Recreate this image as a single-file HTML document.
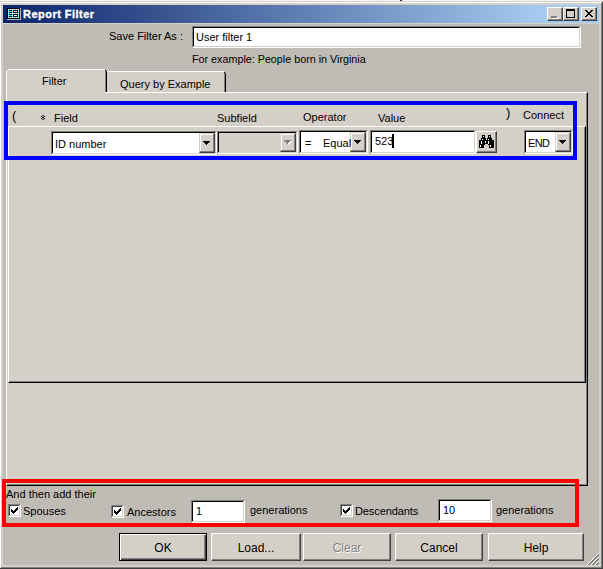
<!DOCTYPE html>
<html><head><meta charset="utf-8">
<style>
*{margin:0;padding:0;box-sizing:border-box}
html,body{width:603px;height:569px;overflow:hidden}
body{position:relative;background:#f6f6f6;font-family:"Liberation Sans",sans-serif;font-size:11px;color:#000}
.a{position:absolute}
.t{position:absolute;white-space:pre;line-height:13px;font-size:11px}
.raised{position:absolute;background:#d4d0c8;border:1px solid;border-color:#fff #404040 #404040 #fff;box-shadow:inset -1px -1px #808080}
.sunken{position:absolute;background:#fff;border:1px solid;border-color:#808080 #fff #fff #808080;box-shadow:inset -1px -1px #d4d0c8,inset 1px 1px #000}
.dd{position:absolute;top:1px;width:16px;bottom:1px;background:#d4d0c8;border:1px solid;border-color:#d4d0c8 #404040 #404040 #d4d0c8;box-shadow:inset -1px -1px #808080,inset 1px 1px #fff}
.arr{position:absolute;left:4px;top:7px;width:0;height:0;border-left:3.5px solid transparent;border-right:3.5px solid transparent;border-top:4px solid #000}
.cb{position:absolute;width:13px;height:13px;background:#fff;border:1px solid;border-color:#808080 #fff #fff #808080;box-shadow:inset -1px -1px #d4d0c8,inset 1px 1px #404040}
.btn{position:absolute;top:533px;height:28px;background:#d4d0c8;border:1px solid;border-color:#fff #404040 #404040 #fff;box-shadow:inset -1px -1px #808080;text-align:center;line-height:28px;font-size:12px}
.cap{position:absolute;top:7px;width:16px;height:14px;background:#d4d0c8;border:1px solid;border-color:#fff #404040 #404040 #fff;box-shadow:inset -1px -1px #808080}
</style></head><body>
<div class="a" style="left:400px;top:0;width:2px;height:1px;background:#333"></div>
<div class="a" style="left:-1px;top:1px;width:604px;height:568px;background:#d4d0c8;border:1px solid;border-color:#d4d0c8 #404040 #404040 #d4d0c8;box-shadow:inset 1px 1px #fff,inset -1px -1px #808080"></div>
<div class="a" style="left:3px;top:5px;width:596px;height:18px;background:linear-gradient(to right,#0a246a 0px,#a6caf0 540px)"></div>
<svg class="a" style="left:7px;top:8px" width="14" height="12" shape-rendering="crispEdges"><rect x="0" y="0" width="14" height="12" fill="#b8b8b8"/><rect x="0" y="0" width="13" height="11" fill="#000"/><rect x="1" y="1" width="11" height="9" fill="#0ff"/><path fill="#fff" d="M1 1h1v1h-1zM3 1h1v1h-1zM5 1h1v1h-1zM7 1h1v1h-1zM9 1h1v1h-1zM11 1h1v1h-1zM1 5h1v1h-1zM3 5h1v1h-1zM5 5h1v1h-1zM7 5h1v1h-1zM9 5h1v1h-1zM11 5h1v1h-1zM1 9h1v1h-1zM3 9h1v1h-1zM5 9h1v1h-1zM7 9h1v1h-1zM9 9h1v1h-1zM11 9h1v1h-1zM1 3h1v1h-1zM1 7h1v1h-1zM5 3h1v1h-1zM5 7h1v1h-1zM11 3h1v1h-1zM11 7h1v1h-1z"/><path fill="#000" d="M2 2h3v1h-3zM2 4h3v1h-3zM2 6h3v1h-3zM2 8h3v1h-3zM6 2h5v3h-5zM6 6h5v3h-5z"/><path fill="#fff" d="M7 3h3v1h-3zM7 7h3v1h-3z"/></svg>
<div class="t" style="left:23px;top:8px;color:#fff;font-weight:bold;font-size:11px;letter-spacing:0.47px;-webkit-text-stroke:0.35px #fff">Report Filter</div>
<div class="cap" style="left:547px"><div class="a" style="left:4px;top:9px;width:6px;height:2px;background:#fff"></div><div class="a" style="left:3px;top:8px;width:6px;height:2px;background:#808080"></div></div>
<div class="cap" style="left:563px"><div class="a" style="left:2px;top:1px;width:9px;height:9px;border:1px solid #000;border-top-width:2px"></div></div>
<div class="cap" style="left:581px"><svg class="a" style="left:3px;top:2px" width="8" height="7" shape-rendering="crispEdges"><path d="M0 0h2v1h-2zM6 0h2v1h-2zM1 1h2v1h-2zM5 1h2v1h-2zM2 2h4v1h-4zM3 3h2v1h-2zM2 4h4v1h-4zM1 5h2v1h-2zM5 5h2v1h-2zM0 6h2v1h-2zM6 6h2v1h-2z"/></svg></div>
<div class="a" style="left:3px;top:24px;width:596px;height:541px;background:#bfbbb5"></div>

<div class="t" style="left:109px;top:30px">Save Filter As :</div>
<div class="sunken" style="left:192px;top:26px;width:389px;height:22px"></div>
<div class="t" style="left:196px;top:31px">User filter 1</div>
<div class="t" style="left:192px;top:53px;font-size:10.75px">For example: People born in Virginia</div>

<div class="a" style="left:6px;top:92px;width:582px;height:394px;background:#d4d0c8;border-top:1px solid #fff;border-left:1px solid #fff;border-right:1px solid #000;border-bottom:1px solid #000;box-shadow:inset -1px -1px #808080"></div>
<div class="a" style="left:6px;top:70px;width:101px;height:22px;background:#d4d0c8;border-left:1px solid #fff;border-right:1px solid #000;box-shadow:inset -1px 0 #808080"></div>
<div class="a" style="left:7px;top:92px;width:98px;height:1px;background:#d4d0c8"></div>
<div class="a" style="left:8px;top:69px;width:97px;height:1px;background:#fff"></div>
<div class="a" style="left:7px;top:70px;width:1px;height:1px;background:#fff"></div>
<div class="a" style="left:105px;top:70px;width:1px;height:1px;background:#000"></div>
<div class="a" style="left:6px;top:70px;width:1px;height:1px;background:#bfbbb5"></div>
<div class="a" style="left:106px;top:70px;width:1px;height:1px;background:#bfbbb5"></div>
<div class="a" style="left:107px;top:72px;width:119px;height:20px;background:#d4d0c8;border-right:1px solid #000;box-shadow:inset -1px 0 #808080"></div>
<div class="a" style="left:107px;top:71px;width:117px;height:1px;background:#fff"></div>
<div class="a" style="left:224px;top:72px;width:1px;height:1px;background:#000"></div>
<div class="a" style="left:225px;top:72px;width:1px;height:1px;background:#bfbbb5"></div>
<div class="t" style="left:42px;top:75px">Filter</div>
<div class="t" style="left:120px;top:78px">Query by Example</div>

<div class="a" style="left:8px;top:126px;width:578px;height:257px;background:#d4d0c8;border-top:1px solid #fff;border-left:1px solid #fff;border-right:1px solid #000;border-bottom:1px solid #000;box-shadow:inset -1px -1px #808080"></div>

<div class="t" style="left:12px;top:108px;font-size:13px;line-height:15px">(</div>
<svg class="a" style="left:40px;top:115px" width="6" height="5" shape-rendering="crispEdges"><path fill="#111" d="M1 1h1v1h-1zM4 1h1v1h-1zM2 2h2v1h-2zM1 3h1v1h-1zM4 3h1v1h-1z"/><path fill="#555" d="M2 0h2v1h-2zM2 4h2v1h-2z"/><path fill="#999" d="M2 1h2v1h-2zM2 3h2v1h-2z"/></svg>
<div class="t" style="left:54px;top:112px">Field</div>
<div class="t" style="left:217px;top:112px">Subfield</div>
<div class="t" style="left:303px;top:111px">Operator</div>
<div class="t" style="left:378px;top:112px">Value</div>
<div class="t" style="left:506px;top:105px;font-size:13px;line-height:15px">)</div>
<div class="t" style="left:523px;top:109px">Connect</div>

<div class="sunken" style="left:51px;top:131px;width:166px;height:24px"><div class="dd" style="right:1px"><svg class="a" style="left:3px;top:7px" width="7" height="4" shape-rendering="crispEdges"><path d="M0 0h7v1h-7zM1 1h5v1h-5zM2 2h3v1h-3zM3 3h1v1h-1z"/></svg></div></div>
<div class="t" style="left:55px;top:138px">ID number</div>
<div class="sunken" style="left:217px;top:131px;width:81px;height:23px;background:#d4d0c8"><div class="dd" style="right:1px"><svg class="a" style="left:3px;top:6px" width="8" height="5" shape-rendering="crispEdges"><path fill="#fff" d="M1 1h7v1h-7zM2 2h5v1h-5zM3 3h3v1h-3zM4 4h1v1h-1z"/><path fill="#808080" d="M0 0h7v1h-7zM1 1h5v1h-5zM2 2h3v1h-3zM3 3h1v1h-1z"/></svg></div></div>
<div class="sunken" style="left:299px;top:130px;width:69px;height:24px"><div class="dd" style="right:1px"><svg class="a" style="left:3px;top:7px" width="7" height="4" shape-rendering="crispEdges"><path d="M0 0h7v1h-7zM1 1h5v1h-5zM2 2h3v1h-3zM3 3h1v1h-1z"/></svg></div></div>
<div class="t" style="left:305px;top:137px">=</div>
<div class="t" style="left:323px;top:137px">Equal</div>
<div class="sunken" style="left:370px;top:130px;width:106px;height:24px"></div>
<div class="t" style="left:375px;top:135px">523</div>
<div class="a" style="left:392px;top:134px;width:2px;height:14px;background:#000"></div>
<div class="raised" style="left:476px;top:131px;width:21px;height:22px"></div>
<svg class="a" style="left:479px;top:135px" width="15" height="13" shape-rendering="crispEdges"><path fill="#000" d="M3 0h3v1h-3zM9 0h3v1h-3zM3 1h3v1h-3zM9 1h3v1h-3zM3 2h3v1h-3zM9 2h3v1h-3zM2 3h5v1h-5zM8 3h5v1h-5zM2 4h5v1h-5zM8 4h5v1h-5zM0 5h15v1h-15zM0 6h15v1h-15zM0 7h15v1h-15zM0 8h15v1h-15zM0 9h6v1h-6zM9 9h6v1h-6zM0 10h5v1h-5zM10 10h5v1h-5zM0 11h5v1h-5zM10 11h5v1h-5zM0 12h5v1h-5zM10 12h5v1h-5z"/><path fill="#fff" d="M4 1h1v1h-1zM10 1h1v1h-1zM3 4h1v1h-1zM9 4h1v1h-1zM2 6h1v1h-1zM2 7h1v1h-1zM2 8h1v1h-1zM6 6h1v1h-1zM6 7h1v1h-1zM9 6h1v1h-1zM9 7h1v1h-1zM9 8h1v1h-1zM1 10h1v1h-1zM1 11h1v1h-1zM11 10h1v1h-1zM11 11h1v1h-1z"/></svg>
<div class="sunken" style="left:524px;top:130px;width:49px;height:24px"><div class="dd" style="right:1px"><svg class="a" style="left:3px;top:7px" width="7" height="4" shape-rendering="crispEdges"><path d="M0 0h7v1h-7zM1 1h5v1h-5zM2 2h3v1h-3zM3 3h1v1h-1z"/></svg></div></div>
<div class="t" style="left:528px;top:137px;letter-spacing:-0.6px">END</div>

<div class="a" style="left:4px;top:101px;width:573px;height:59px;border:4px solid #0000ff"></div>

<div class="t" style="left:6px;top:488px">And then add their</div>
<div class="cb" style="left:8px;top:504px"></div><svg class="a" style="left:11px;top:507px" width="7" height="7" shape-rendering="crispEdges"><path d="M6 0h1v1h-1zM5 1h2v1h-2zM0 2h1v1h-1zM4 2h3v1h-3zM0 3h2v1h-2zM3 3h3v1h-3zM0 4h5v1h-5zM1 5h3v1h-3zM2 6h1v1h-1z"/></svg>
<div class="t" style="left:23px;top:505px">Spouses</div>
<div class="cb" style="left:111px;top:505px"></div><svg class="a" style="left:114px;top:508px" width="7" height="7" shape-rendering="crispEdges"><path d="M6 0h1v1h-1zM5 1h2v1h-2zM0 2h1v1h-1zM4 2h3v1h-3zM0 3h2v1h-2zM3 3h3v1h-3zM0 4h5v1h-5zM1 5h3v1h-3zM2 6h1v1h-1z"/></svg>
<div class="t" style="left:127px;top:506px">Ancestors</div>
<div class="sunken" style="left:191px;top:500px;width:54px;height:23px"></div>
<div class="t" style="left:196px;top:505px">1</div>
<div class="t" style="left:250px;top:504px">generations</div>
<div class="cb" style="left:340px;top:504px"></div><svg class="a" style="left:343px;top:507px" width="7" height="7" shape-rendering="crispEdges"><path d="M6 0h1v1h-1zM5 1h2v1h-2zM0 2h1v1h-1zM4 2h3v1h-3zM0 3h2v1h-2zM3 3h3v1h-3zM0 4h5v1h-5zM1 5h3v1h-3zM2 6h1v1h-1z"/></svg>
<div class="t" style="left:355px;top:505px;letter-spacing:-0.1px">Descendants</div>
<div class="sunken" style="left:438px;top:499px;width:54px;height:23px"></div>
<div class="t" style="left:443px;top:504px">10</div>
<div class="t" style="left:496px;top:504px">generations</div>

<div class="a" style="left:2px;top:479px;width:577px;height:48px;border:4px solid #ff0000"></div>

<div class="btn" style="left:119px;width:88px;border:1px solid #000;box-shadow:inset 1px 1px #fff,inset -1px -1px #404040,inset -2px -2px #808080">OK</div>
<div class="btn" style="left:211px;width:90px">Load...</div>
<div class="btn" style="left:303px;width:88px;color:#808080;text-shadow:1px 1px #fff">Clear</div>
<div class="btn" style="left:395px;width:88px">Cancel</div>
<div class="btn" style="left:488px;width:96px">Help</div>
<svg class="a" style="left:586px;top:552px" width="13" height="13" shape-rendering="crispEdges"><path fill="#fff" d="M1 12h1v1h-1zM2 11h1v1h-1zM3 10h1v1h-1zM4 9h1v1h-1zM5 8h1v1h-1zM6 7h1v1h-1zM7 6h1v1h-1zM8 5h1v1h-1zM9 4h1v1h-1zM10 3h1v1h-1zM11 2h1v1h-1zM12 1h1v1h-1zM5 12h1v1h-1zM6 11h1v1h-1zM7 10h1v1h-1zM8 9h1v1h-1zM9 8h1v1h-1zM10 7h1v1h-1zM11 6h1v1h-1zM12 5h1v1h-1zM9 12h1v1h-1zM10 11h1v1h-1zM11 10h1v1h-1zM12 9h1v1h-1z"/><path fill="#808080" d="M2 12h1v1h-1zM3 11h1v1h-1zM4 10h1v1h-1zM5 9h1v1h-1zM6 8h1v1h-1zM7 7h1v1h-1zM8 6h1v1h-1zM9 5h1v1h-1zM10 4h1v1h-1zM11 3h1v1h-1zM12 2h1v1h-1zM3 12h1v1h-1zM4 11h1v1h-1zM5 10h1v1h-1zM6 9h1v1h-1zM7 8h1v1h-1zM8 7h1v1h-1zM9 6h1v1h-1zM10 5h1v1h-1zM11 4h1v1h-1zM12 3h1v1h-1zM6 12h1v1h-1zM7 11h1v1h-1zM8 10h1v1h-1zM9 9h1v1h-1zM10 8h1v1h-1zM11 7h1v1h-1zM12 6h1v1h-1zM7 12h1v1h-1zM8 11h1v1h-1zM9 10h1v1h-1zM10 9h1v1h-1zM11 8h1v1h-1zM12 7h1v1h-1zM10 12h1v1h-1zM11 11h1v1h-1zM12 10h1v1h-1zM11 12h1v1h-1zM12 11h1v1h-1z"/></svg>
</body></html>
